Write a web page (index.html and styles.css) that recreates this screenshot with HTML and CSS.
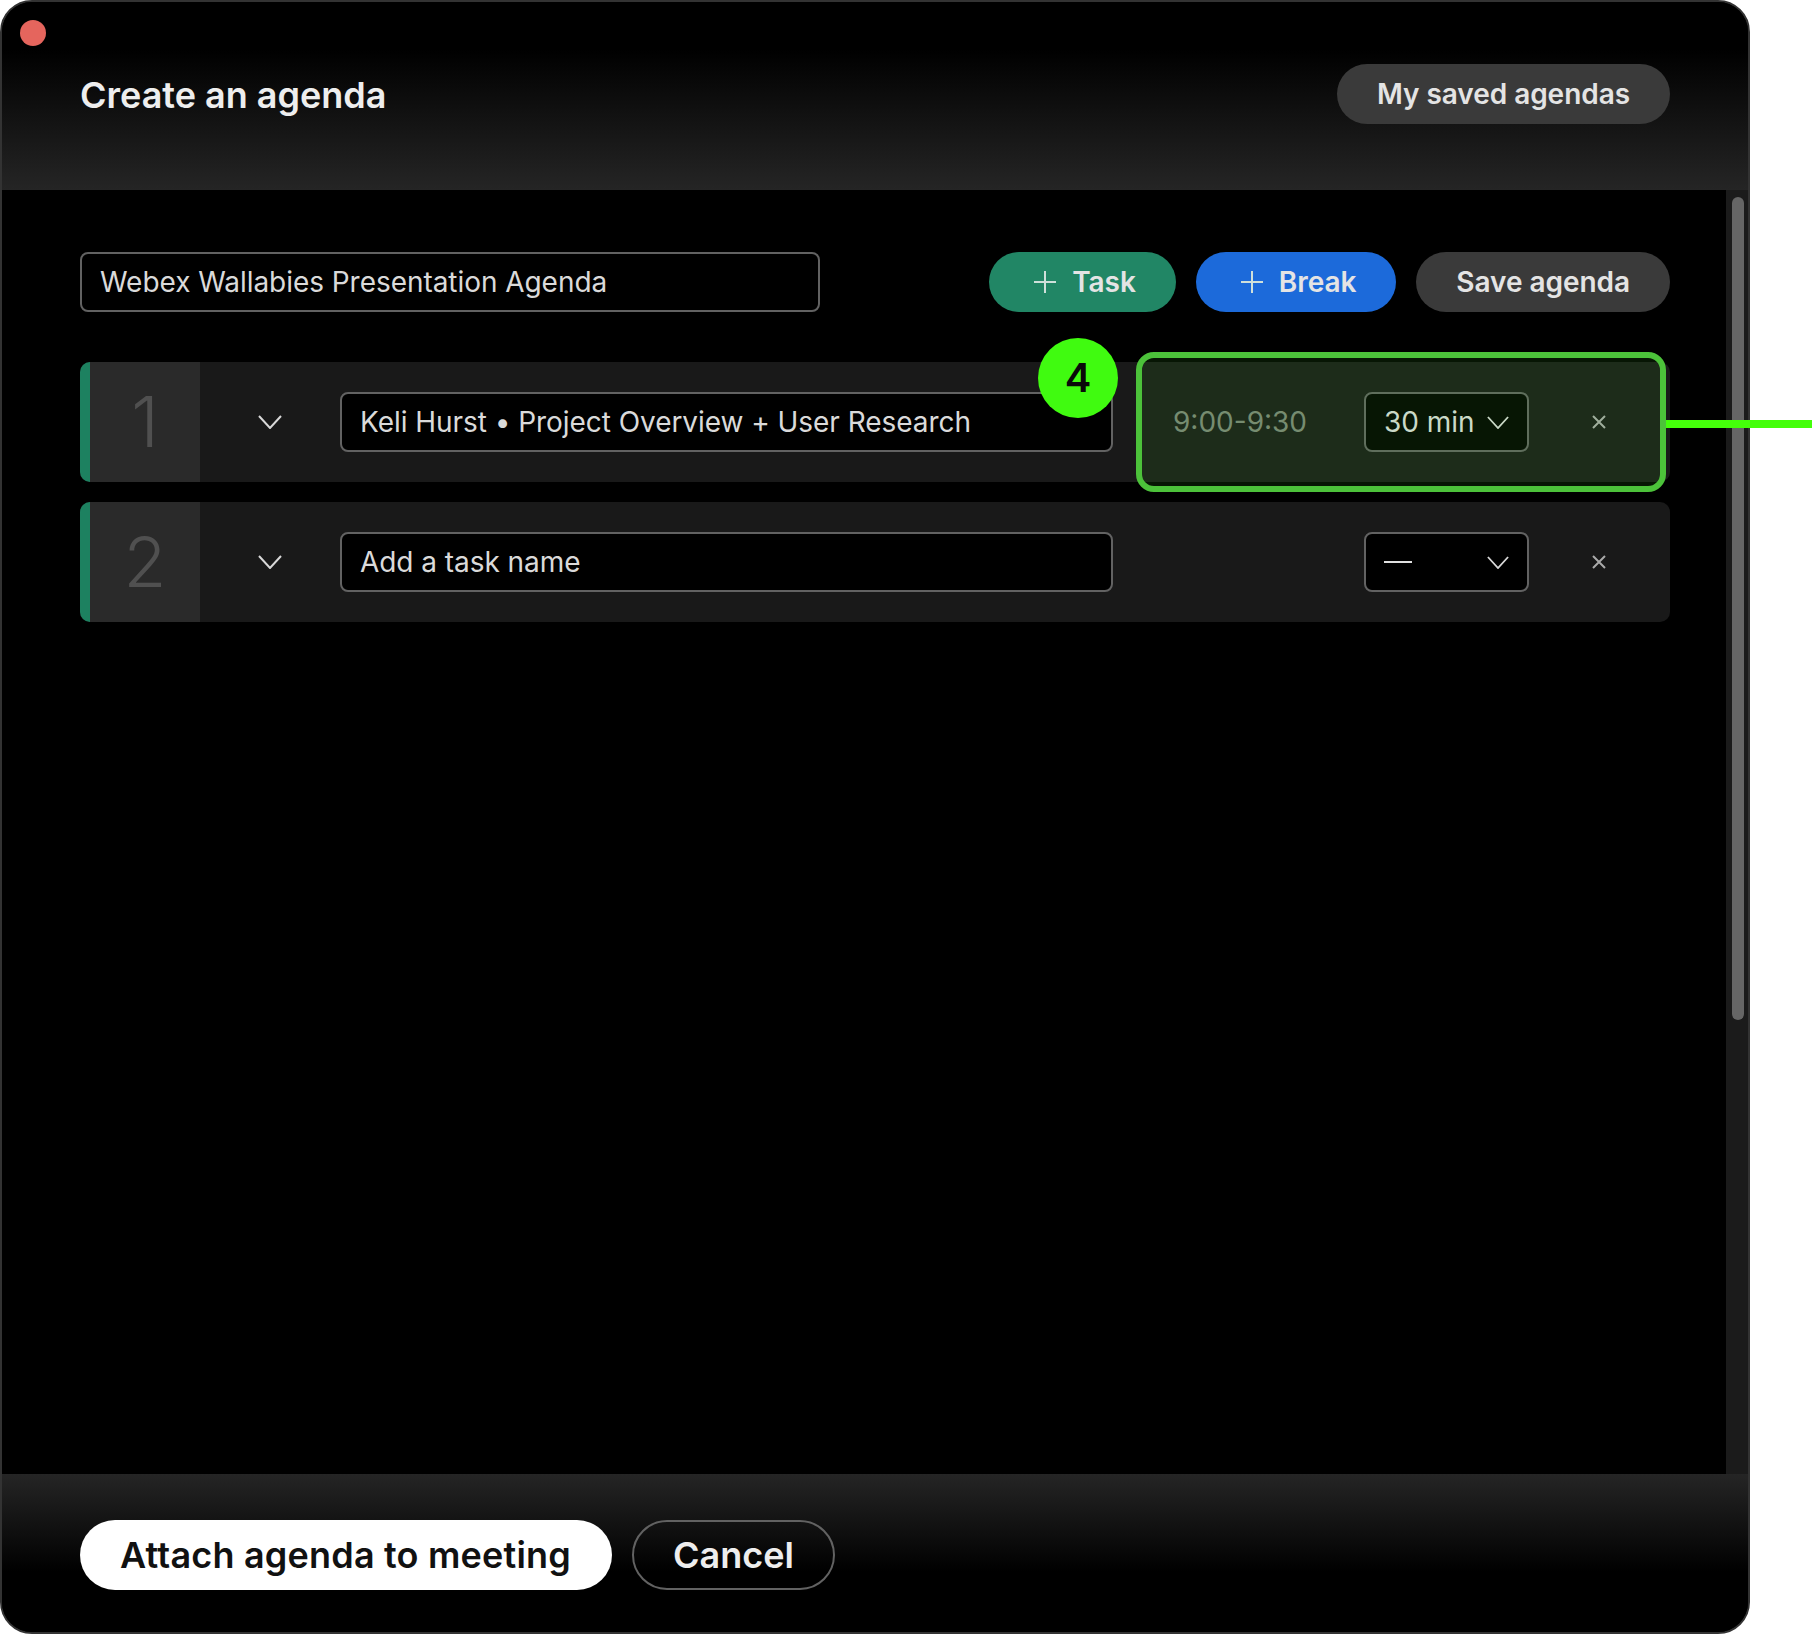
FILE: index.html
```html
<!DOCTYPE html>
<html lang="en">
<head>
<meta charset="utf-8">
<title>Create an agenda</title>
<link rel="stylesheet" href="styles.css">
</head>
<body>
<div class="window">
  <span class="close-dot"></span>
  <header class="header">
    <h1 class="title">Create an agenda</h1>
    <button class="pill pill-gray">My saved agendas</button>
  </header>
  <div class="middle">
    <main class="content">
      <div class="toolbar">
        <div class="field field-title">Webex Wallabies Presentation Agenda</div>
        <div class="toolbar-actions">
          <button class="pill pill-icon pill-green"><svg class="plus" viewBox="0 0 24 24"><path d="M12 1v22M1 12h22"/></svg>Task</button>
          <button class="pill pill-icon pill-blue"><svg class="plus" viewBox="0 0 24 24"><path d="M12 1v22M1 12h22"/></svg>Break</button>
          <button class="pill pill-gray">Save agenda</button>
        </div>
      </div>
      <div class="tasks">
        <div class="task">
          <div class="task-num">1</div>
          <svg class="chevron chevron-task" viewBox="0 0 24 14"><path d="M1 1l11 12L23 1"/></svg>
          <div class="field field-task">Keli Hurst • Project Overview + User Research</div>
          <div class="task-time">9:00-9:30</div>
          <div class="field field-select">30 min<svg class="chevron chevron-select" viewBox="0 0 24 14"><path d="M1 1l11 12L23 1"/></svg></div>
          <svg class="remove" viewBox="0 0 16 16"><path d="M2 2l12 12M14 2L2 14"/></svg>
          <div class="callout"></div>
          <div class="callout-line"></div>
          <div class="badge">4</div>
        </div>
        <div class="task">
          <div class="task-num">2</div>
          <svg class="chevron chevron-task" viewBox="0 0 24 14"><path d="M1 1l11 12L23 1"/></svg>
          <div class="field field-task">Add a task name</div>
          <div class="task-time"></div>
          <div class="field field-select"><span class="dash"></span><svg class="chevron chevron-select" viewBox="0 0 24 14"><path d="M1 1l11 12L23 1"/></svg></div>
          <svg class="remove" viewBox="0 0 16 16"><path d="M2 2l12 12M14 2L2 14"/></svg>
        </div>
      </div>
    </main>
    <div class="scroll-track"><div class="scroll-thumb"></div></div>
  </div>
  <footer class="footer">
    <button class="cta cta-primary">Attach agenda to meeting</button>
    <button class="cta cta-outline">Cancel</button>
  </footer>
</div>
</body>
</html>
```
FILE: styles.css
```css
* { box-sizing: border-box; }
html, body { margin: 0; padding: 0; background: #fff; }
body { font-family: Inter, "Liberation Sans", sans-serif; color: #e6e6e6; }
button { font-family: inherit; border: 0; cursor: pointer; }

.window {
  position: relative;
  width: 1750px;
  height: 1634px;
  display: flex;
  flex-direction: column;
  background: #000;
  border: 2px solid #333;
  border-radius: 32px;
}
.close-dot {
  position: absolute;
  left: 18px;
  top: 18px;
  width: 26px;
  height: 26px;
  border-radius: 50%;
  background: #e5655d;
}

.header {
  height: 188px;
  flex: none;
  display: flex;
  justify-content: space-between;
  align-items: flex-start;
  padding: 62px 78px 0;
  border-radius: 30px 30px 0 0;
  background: linear-gradient(180deg, #000 25%, #252525 100%);
}
.title {
  margin: 1px 0 0;
  font-size: 36px;
  line-height: 60px;
  font-weight: 600;
  color: #eee;
}

.pill {
  height: 60px;
  padding: 0 40px;
  border-radius: 30px;
  display: inline-flex;
  align-items: center;
  gap: 15px;
  font-size: 28px;
  font-weight: 600;
  letter-spacing: -0.05px;
  color: #e4e4e4;
}
.pill-icon { padding: 0 40px 0 44px; }
.pill-gray { background: #3a3a3a; }
.pill-green { background: #218665; }
.pill-blue { background: #1c6ada; }
.plus { width: 24px; height: 24px; fill: none; stroke: #cfe0da; stroke-width: 2; }

.middle { flex: 1; display: flex; min-height: 0; }
.content { flex: 1; padding: 62px 56px 0 78px; }
.toolbar { display: flex; justify-content: space-between; }
.toolbar-actions { display: flex; gap: 20px; }

.field {
  height: 60px;
  display: flex;
  align-items: center;
  padding: 0 18px;
  border: 2px solid #626262;
  border-radius: 8px;
  background: #000;
  font-size: 28px;
  letter-spacing: -0.05px;
  color: #dadada;
  white-space: nowrap;
}
.field-title { width: 740px; }
.field-task { width: 773px; margin-left: 58px; }
.field-select { width: 165px; justify-content: space-between; padding-right: 18px; }
.dash { width: 28px; height: 2px; background: #e0e0e0; }

.tasks { margin-top: 50px; display: flex; flex-direction: column; gap: 20px; }
.task {
  position: relative;
  height: 120px;
  display: flex;
  align-items: center;
  background: #191919;
  border-radius: 10px;
}
.task-num {
  width: 120px;
  height: 120px;
  flex: none;
  border-left: 10px solid #1d8160;
  border-radius: 10px 0 0 10px;
  background: #2a2a2a;
  color: #505050;
  font-size: 70px;
  font-weight: 300;
  line-height: 120px;
  text-align: center;
}
.chevron { fill: none; stroke: #d8d8d8; stroke-width: 2; flex: none; }
.chevron-task { width: 24px; height: 14px; margin-left: 58px; }
.chevron-select { width: 22px; height: 13px; }
.task-time {
  width: 251px;
  flex: none;
  padding-left: 60px;
  font-size: 28px;
  color: #7c8479;
  white-space: nowrap;
}
.remove {
  width: 16px;
  height: 16px;
  margin-left: 62px;
  flex: none;
  fill: none;
  stroke: #aaa;
  stroke-width: 2;
}

.callout {
  position: absolute;
  left: 1056px;
  top: -10px;
  width: 530px;
  height: 140px;
  border: 6px solid #4cc23a;
  border-radius: 18px;
  background: rgba(70, 220, 40, 0.1);
}
.callout-line {
  position: absolute;
  left: 1586px;
  top: 58px;
  width: 146px;
  height: 8px;
  background: #44ff0a;
}
.badge {
  position: absolute;
  left: 958px;
  top: -24px;
  width: 80px;
  height: 80px;
  border-radius: 50%;
  background: #40fb10;
  color: #0a0a0a;
  font-size: 40px;
  font-weight: 600;
  line-height: 80px;
  text-align: center;
}

.scroll-track {
  width: 22px;
  flex: none;
  background: #1b1b1b;
  padding: 7px 4px 0 6px;
}
.scroll-thumb { height: 823px; border-radius: 6px; background: #666; }

.footer {
  height: 158px;
  flex: none;
  display: flex;
  align-items: flex-start;
  gap: 20px;
  padding: 46px 78px 0;
  border-radius: 0 0 30px 30px;
  background: linear-gradient(180deg, #252525 0%, #000 62%);
}
.cta {
  height: 70px;
  border-radius: 35px;
  font-size: 36px;
  font-weight: 600;
}
.cta-primary { padding: 0 41px 0 40px; letter-spacing: 0.2px; background: #fff; color: #111; }
.cta-outline { padding: 0 39px; background: transparent; color: #eee; border: 2px solid #626262; }
```
